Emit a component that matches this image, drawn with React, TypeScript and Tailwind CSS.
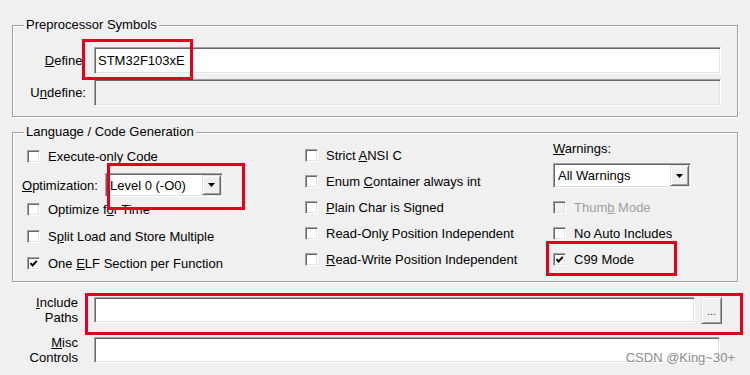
import type { ReactNode } from "react";

// Win32 classic 3D edges
const sunken =
  "border border-t-[#a0a0a0] border-l-[#a0a0a0] border-b-white border-r-white shadow-[inset_1px_1px_0_#696969,inset_-1px_-1px_0_#e3e3e3]";
const raised =
  "border border-t-[#e3e3e3] border-l-[#e3e3e3] border-b-[#696969] border-r-[#696969] shadow-[inset_1px_1px_0_#fff,inset_-1px_-1px_0_#a0a0a0]";
const etched =
  "border border-[#a0a0a0] shadow-[inset_1px_1px_0_#fff,1px_1px_0_#fff]";

function Check({
  label,
  checked = false,
  disabled = false,
  className = "",
}: {
  label: ReactNode;
  checked?: boolean;
  disabled?: boolean;
  className?: string;
}) {
  return (
    <div className={`flex items-center h-[15px] gap-[8px] ${className}`}>
      <div
        className={`w-[13px] h-[13px] shrink-0 ${disabled ? "bg-[#f0f0f0]" : "bg-white"} ${sunken}`}
      >
        {checked && (
          <svg viewBox="0 0 11 11" className="w-[11px] h-[11px]">
            <path d="M2.5 5.2 L4.6 7.5 L8.8 2.8" fill="none" stroke="#000" strokeWidth="1.9" />
          </svg>
        )}
      </div>
      <span className={`whitespace-nowrap ${disabled ? "text-[#a0a0a0]" : ""}`}>{label}</span>
    </div>
  );
}

function Combo({ value, width, height }: { value: string; width: string; height: string }) {
  return (
    <div className={`flex items-center p-[1px] bg-white ${sunken} ${width} ${height}`}>
      <span className="flex-1 pl-[3px] whitespace-nowrap">{value}</span>
      <div className={`w-[19px] h-full flex items-center justify-center bg-[#f0f0f0] ${raised}`}>
        <svg viewBox="0 0 7 4" className="w-[7px] h-[4px]">
          <polygon points="0,0 7,0 3.5,4" fill="#000" />
        </svg>
      </div>
    </div>
  );
}

function RedBox({ className }: { className: string }) {
  return <div className={`absolute border-[3px] border-[#e3001b] pointer-events-none ${className}`} />;
}

export default function App() {
  return (
    <div className="relative w-[750px] h-[375px] overflow-hidden bg-[#f0f0f0] pt-[25px] px-[12px] text-[13px] leading-[15px] text-black font-['Liberation_Sans',Arial,sans-serif]">
      {/* Preprocessor Symbols */}
      <div className={`relative h-[92px] pt-[21px] pr-[16px] ${etched}`}>
        <span className="absolute -top-[9px] left-[11px] px-[2px] bg-[#f0f0f0]">Preprocessor Symbols</span>
        <div className="flex items-center h-[27px]">
          <span className="w-[73px] text-right">
            <u>D</u>efine:
          </span>
          <div className={`ml-[8px] flex-1 h-[27px] flex items-center pl-[3px] bg-white ${sunken}`}>
            STM32F103xE
          </div>
        </div>
        <div className="flex items-center h-[27px] mt-[5px]">
          <span className="w-[73px] text-right">
            U<u>n</u>define:
          </span>
          <div className={`ml-[8px] flex-1 h-[27px] bg-[#f0f0f0] ${sunken}`} />
        </div>
      </div>

      {/* Language / Code Generation */}
      <div className={`relative mt-[15px] h-[150px] flex ${etched}`}>
        <span className="absolute -top-[9px] left-[11px] px-[2px] bg-[#f0f0f0]">Language / Code Generation</span>

        <div className="w-[291px] pl-[9px] pt-[16px]">
          <Check className="ml-[5px]" label="Execute-only Code" />
          <div className="flex items-center h-[24px] mt-[9px]">
            <span className="w-[83px]">
              <u>O</u>ptimization:
            </span>
            <Combo value="Level 0 (-O0)" width="w-[118px]" height="h-[24px]" />
          </div>
          <Check className="ml-[5px] mt-[5px]" label={<>Optimize f<u>o</u>r Time</>} />
          <Check className="ml-[5px] mt-[12px]" label={<>S<u>p</u>lit Load and Store Multiple</>} />
          <Check className="ml-[5px] mt-[12px]" checked label={<>One <u>E</u>LF Section per Function</>} />
        </div>

        <div className="w-[249px] pl-[1px] pt-[15px]">
          <Check label={<>Strict <u>A</u>NSI C</>} />
          <Check className="mt-[11px]" label={<>Enum <u>C</u>ontainer always int</>} />
          <Check className="mt-[11px]" label={<><u>P</u>lain Char is Signed</>} />
          <Check className="mt-[11px]" label={<>Read-Onl<u>y</u> Position Independent</>} />
          <Check className="mt-[11px]" label={<><u>R</u>ead-Write Position Independent</>} />
        </div>

        <div className="flex-1 pt-[8px]">
          <div className="h-[15px]">
            <u>W</u>arnings:
          </div>
          <div className="mt-[7px]">
            <Combo value="All Warnings" width="w-[138px]" height="h-[25px]" />
          </div>
          <Check className="mt-[12px]" disabled label={<>Thum<u>b</u> Mode</>} />
          <Check className="mt-[11px]" label="No Auto Includes" />
          <Check className="mt-[11px]" checked label="C99 Mode" />
        </div>
      </div>

      {/* Include Paths / Misc Controls */}
      <div className="mt-[15px] flex items-center h-[26px] mr-[16px]">
        <div className="w-[66px] text-right">
          <u>I</u>nclude
          <br />
          Paths
        </div>
        <div className={`ml-[16px] flex-1 h-[26px] bg-white ${sunken}`} />
        <div
          className={`ml-[6px] w-[21px] h-[27px] flex items-end justify-center pb-[6px] text-[11px] leading-[11px] text-[#3a3a6a] bg-[#f0f0f0] ${raised}`}
        >
          ...
        </div>
      </div>
      <div className="mt-[14px] flex items-center h-[26px] mr-[18px]">
        <div className="w-[66px] text-right">
          <u>M</u>isc
          <br />
          Controls
        </div>
        <div className={`ml-[16px] flex-1 h-[26px] bg-white ${sunken}`} />
      </div>

      <span className="absolute right-[15px] bottom-[10px] text-[#8d8d8d] whitespace-nowrap">CSDN @King~30+</span>

      <RedBox className="left-[82px] top-[39px] w-[111px] h-[41px]" />
      <RedBox className="left-[107px] top-[163px] w-[138px] h-[47px]" />
      <RedBox className="left-[546px] top-[241px] w-[131px] h-[35px]" />
      <RedBox className="left-[85px] top-[293px] w-[658px] h-[42px]" />
    </div>
  );
}
